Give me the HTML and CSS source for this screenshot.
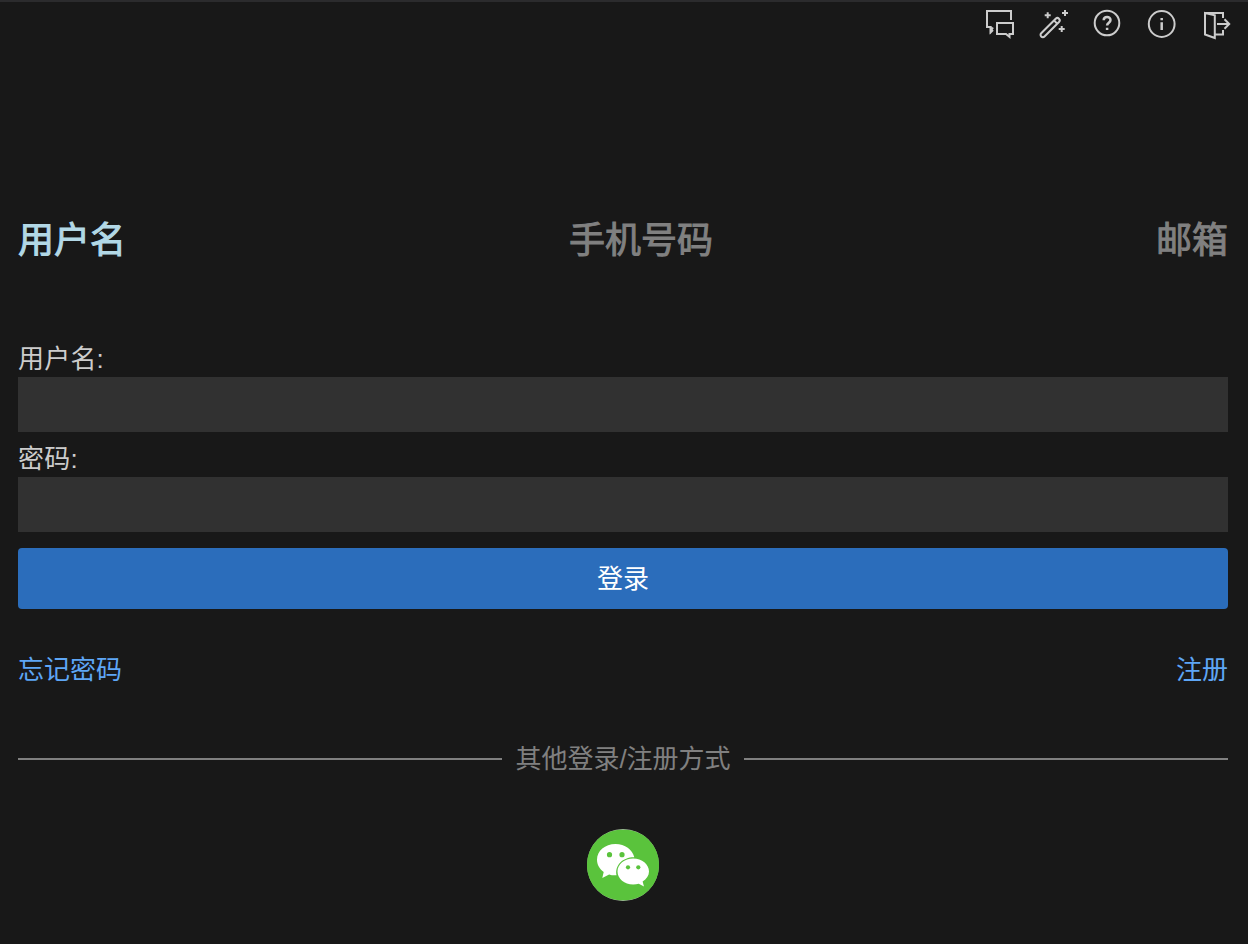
FILE: index.html
```html
<!doctype html>
<html lang="zh-CN">
    <head>
        <meta charset="utf-8">
        <title>登录</title>
        <link rel="stylesheet" href="styles.css">
    </head>
    <body>
        <div class="toolbar">
            <svg class="icon" viewBox="0 0 32 32">
                <path d="M27 12V3H3v16h3.700v4l2.300-3.500"/>
                <path d="M6.700 19v5.300L9 22"/>
                <path d="M13 15h16v11h-3.500v2.800L22 26h-9z"/>
            </svg>
            <svg class="icon" viewBox="0 0 32 32">
                <path d="M3.200 25.200L17.700 10.700a2.300 2.300 0 0 1 3.300 3.300L6.500 28.500a2.300 2.300 0 0 1-3.300-3.300zM16 12.400l3.300 3.300"/>
                <path d="M9.700 4.200v6M6.700 7.200h6M27 2v6M24 5h6M23.700 18v6M20.700 21h6"/>
            </svg>
            <svg class="icon" viewBox="0 0 32 32">
                <circle cx="15" cy="15" r="12.300"/>
                <path class="bold" d="M11.700 12.300c0-4.300 6.800-4.300 6.800-.3 0 2.700-3.400 2.800-3.400 5.600M15.100 19.700v2.300"/>
            </svg>
            <svg class="icon" viewBox="0 0 32 32">
                <circle cx="15.700" cy="16" r="12.900"/>
                <path class="bold" d="M15.700 10v2.300M15.700 14.300v7.700"/>
            </svg>
            <svg class="icon" viewBox="0 0 32 32">
                <path d="M5 5l9.800 2.300V30L5 26.500zM5 5h18v5M23 22v4.500h-8M17 16h12M24.500 11.300L29.200 16l-4.700 4.700"/>
            </svg>
        </div>
        <div class="login">
            <ul class="tabs">
                <li class="active">用户名</li>
                <li>手机号码</li>
                <li>邮箱</li>
            </ul>
            <form class="login-form" action="">
                <label for="username">用户名:</label>
                <input id="username" type="text">
                <label for="password">密码:</label>
                <input id="password" type="password">
                <button type="submit">登录</button>
            </form>
            <div class="links">
                <a href="#">忘记密码</a>
                <a href="#">注册</a>
            </div>
            <div class="other">其他登录/注册方式</div>
            <a class="wechat" href="#">
                <svg viewBox="0 0 72 72">
                    <circle cx="36" cy="36" r="36" fill="#aeb8ab"/>
                    <path fill="#5ac33c" d="M14 7.500C21 2.500 28 .7 36 .7s15 1.800 22 6.800A36 36 0 0 1 58 64.500c-7 5-14 6.800-22 6.800s-15-1.800-22-6.800A36 36 0 0 1 14 7.500z"/>
                    <path fill="#fff" d="M28.500 15C18 15 10 21.800 10 30.800c0 5 2.500 9.200 6.700 12.200L15.300 49l6.800-3.500c2.200.7 4.700 1 7.400.8C27.500 36 36 28 47.300 28.200 45.500 20.500 38 15 28.500 15z"/>
                    <path fill="#fff" d="M46.200 29.500c-8.800 0-15.700 5.700-15.700 13s6.900 13 15.700 13c2 0 3.800-.3 5.500-.8l5.300 2.800-1.400-5c4-2.500 6.400-6 6.400-10 0-7.300-7-13-15.800-13z"/>
                    <g fill="#5ac33c">
                        <circle cx="22.500" cy="25.700" r="2.600"/>
                        <circle cx="35" cy="25.700" r="2.600"/>
                        <circle cx="41" cy="38.300" r="2.100"/>
                        <circle cx="51.300" cy="38.300" r="2.100"/>
                    </g>
                </svg>
            </a>
        </div>
    </body>
</html>
```
FILE: styles.css
```css
html,body,ul,li {
    padding:0;
    margin:0;
}
* {
    box-sizing:border-box;
}
ul,li {
    list-style:none;
}
a {
    text-decoration:none;
}
body {
    height:944px;
    overflow:hidden;
    background:#181818;
    border-top:2px solid #2b2b2d;
    color:#ccc;
    font-size:26px;
    font-family:"Liberation Sans","Noto Sans CJK SC",sans-serif;
}

.toolbar {
    display:flex;
    justify-content:flex-end;
    gap:22px;
    padding:6px 16px 0 0;
}
.icon {
    width:32px;
    height:32px;
    fill:none;
    stroke:#ccc;
    stroke-width:2;
}
.icon .bold {
    stroke-width:2.5;
}

.login {
    padding:175px 20px 0 18px;
}
.tabs {
    display:flex;
    justify-content:space-between;
    height:52px;
    line-height:52px;
    font-size:36px;
    color:#808080;
    -webkit-text-stroke:1px currentColor;
}
.tabs .active {
    color:#b2d8e6;
}

.login-form {
    display:flex;
    flex-direction:column;
    margin-top:74px;
}
.login-form label {
    height:36px;
    line-height:36px;
    letter-spacing:.2px;
}
.login-form input {
    height:55px;
    margin-bottom:9px;
    padding:0 8px;
    border:none;
    outline:none;
    background:#313131;
    color:#ccc;
    font:inherit;
}
.login-form button {
    height:61px;
    margin-top:7px;
    padding:0 0 4px;
    border:none;
    border-radius:4px;
    background:#2b6dbb;
    color:#fff;
    font:inherit;
}

.links {
    display:flex;
    justify-content:space-between;
    margin-top:43px;
    line-height:36px;
}
.links a {
    color:#5ea6f5;
}

.other {
    display:flex;
    align-items:center;
    gap:13.4px;
    margin-top:53px;
    line-height:36px;
    color:#808080;
}
.other:before,
.other:after {
    content:'';
    flex:1;
    height:2px;
    background:#808080;
}

.wechat {
    display:block;
    width:72px;
    height:72px;
    margin:52px auto 0;
}
.wechat svg {
    display:block;
}
```
